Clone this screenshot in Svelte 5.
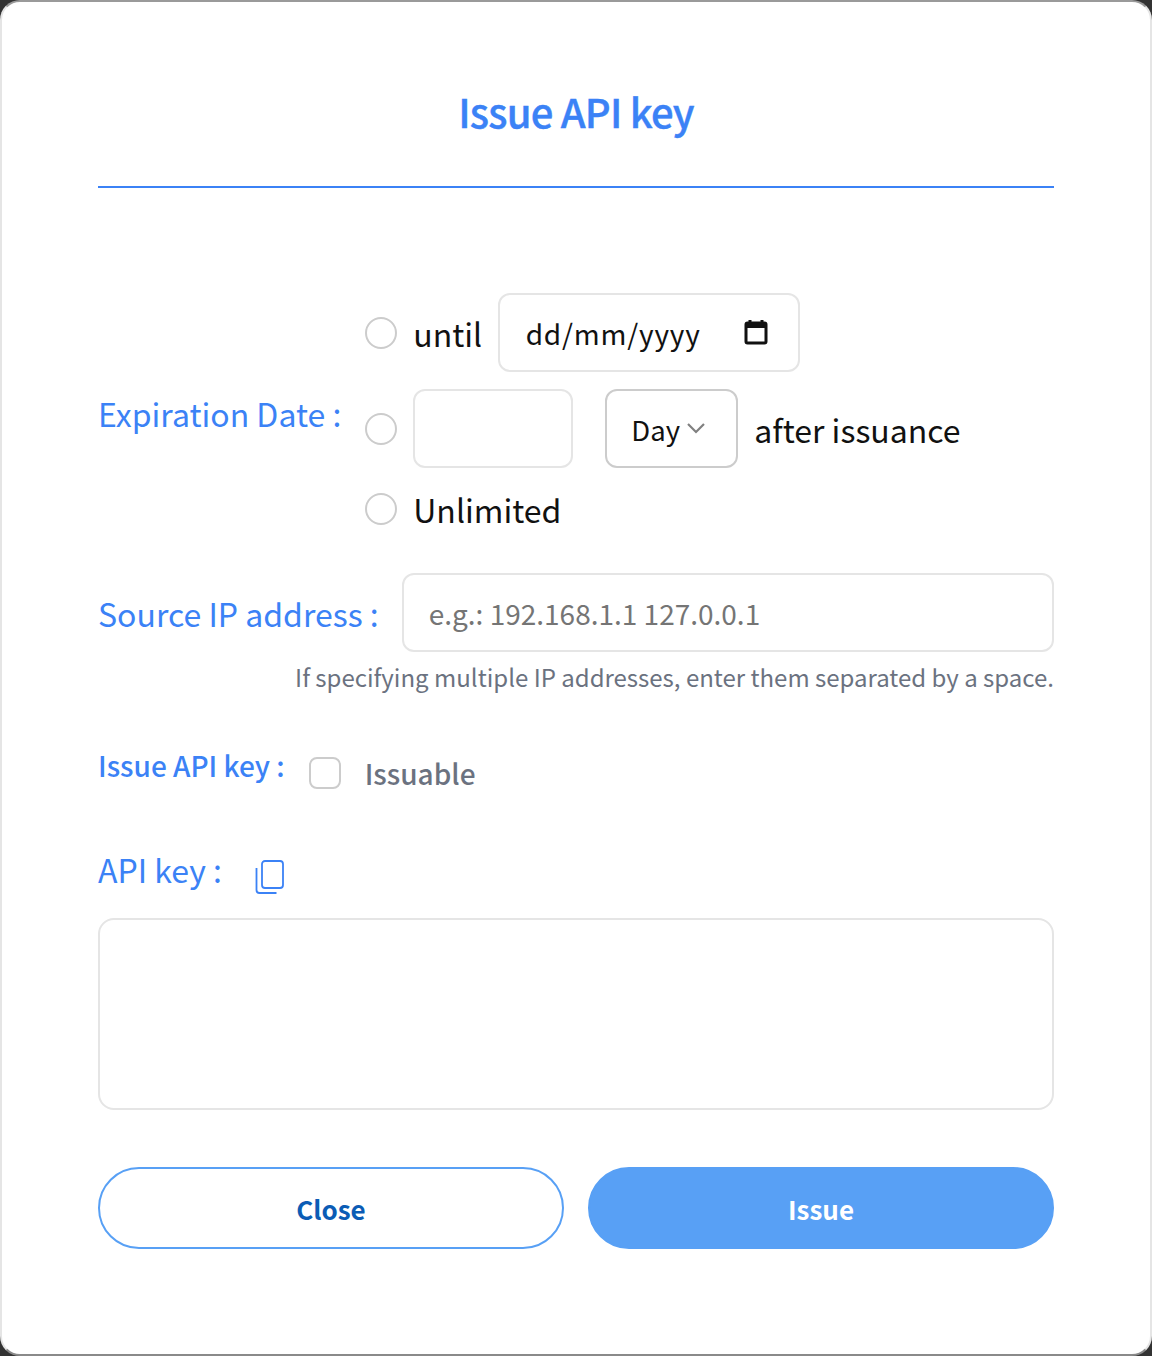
<script lang="ts">
    let period = $state("");
    let count = $state("");
    let sourceIp = $state("");
    let issuable = $state(false);
    let apiKey = $state("");
</script>

<div class="dialog">
    <h1 class="title">Issue API key</h1>

    <div class="expiry">
        <span class="label">Expiration Date :</span>
        <div class="expiry-options">
            <div class="option first">
                <input class="radio" type="radio" name="period" value="until" bind:group={period} />
                <span class="text">until</span>
                <div class="field date-field">
                    <span>dd/mm/yyyy</span>
                    <svg class="calendar" width="24" height="26" viewBox="0 0 24 26">
                        <path d="M6 1v4M18 1v4" stroke="#111" stroke-width="3" fill="none" />
                        <rect x="2" y="4" width="20" height="20" rx="1.5" fill="none" stroke="#111" stroke-width="3" />
                        <rect x="2" y="4" width="20" height="5" fill="#111" />
                    </svg>
                </div>
            </div>
            <div class="option second">
                <input class="radio" type="radio" name="period" value="after" bind:group={period} />
                <input class="field count-field" type="text" bind:value={count} />
                <div class="field select-field">
                    <span>Day</span>
                    <svg width="20" height="12" viewBox="0 0 20 12">
                        <path d="M2 2l8 8 8-8" stroke="#808080" stroke-width="2.2" fill="none" />
                    </svg>
                </div>
                <span class="text">after issuance</span>
            </div>
            <div class="option third">
                <input class="radio" type="radio" name="period" value="unlimited" bind:group={period} />
                <span class="text">Unlimited</span>
            </div>
        </div>
    </div>

    <div class="source">
        <span class="label">Source IP address :</span>
        <input class="field source-field" type="text" placeholder="e.g.: 192.168.1.1 127.0.0.1" bind:value={sourceIp} />
    </div>
    <p class="hint">If specifying multiple IP addresses, enter them separated by a space.</p>

    <div class="issue-row">
        <span class="label small">Issue API key :</span>
        <input class="check" type="checkbox" bind:checked={issuable} />
        <span class="issuable">Issuable</span>
    </div>

    <div class="key-row">
        <span class="label">API key :</span>
        <svg class="copy" width="30" height="36" viewBox="0 0 30 36">
            <rect x="7" y="1" width="21" height="27" rx="3" fill="none" stroke="#3b82f6" stroke-width="1.8" />
            <path d="M1.5 8v22q0 3 3 3h17" fill="none" stroke="#3b82f6" stroke-width="1.8" />
        </svg>
    </div>
    <textarea class="field key-area" bind:value={apiKey}></textarea>

    <div class="actions">
        <button class="btn close">Close</button>
        <button class="btn issue">Issue</button>
    </div>
</div>

<style>
    :global(body) {
        margin: 0;
        background: #333;
    }

    .dialog {
        width: 1152px;
        height: 1356px;
        box-sizing: border-box;
        padding: 0 96px;
        background: #fff;
        border: 2px solid #e5e5e5;
        border-top-color: #9a9a9a;
        border-bottom-color: #8a8a8a;
        border-radius: 20px;
        font-family: "Noto Sans CJK JP", "Noto Sans", sans-serif;
        color: #111;
        overflow: hidden;
    }

    .title {
        margin: 0;
        height: 186px;
        padding-top: 80px;
        box-sizing: border-box;
        border-bottom: 2px solid #3b82f6;
        font-size: 40px;
        line-height: 58px;
        font-weight: 500;
        letter-spacing: -0.8px;
        -webkit-text-stroke: 0.4px #3b82f6;
        text-align: center;
        color: #3b82f6;
    }

    .label {
        font-size: 32px;
        line-height: 48px;
        color: #3b82f6;
        white-space: nowrap;
    }

    .label.small {
        font-size: 28px;
        line-height: 40px;
        font-weight: 500;
    }

    .text {
        font-size: 32px;
        line-height: 48px;
    }

    .field {
        box-sizing: border-box;
        height: 79px;
        margin: 0;
        background: #fff;
        border: 2px solid #e5e5e5;
        border-radius: 12px;
        font-family: inherit;
        outline: none;
    }

    .expiry {
        display: flex;
        align-items: center;
        gap: 24px;
        margin-top: 105px;
    }

    .expiry-options {
        display: flex;
        flex-direction: column;
    }

    .option {
        display: flex;
        align-items: center;
        gap: 16px;
    }

    .second {
        margin-top: 17px;
    }

    .third {
        margin-top: 17px;
        height: 48px;
    }

    .radio,
    .check {
        appearance: none;
        box-sizing: border-box;
        width: 32px;
        height: 32px;
        margin: 0;
        flex-shrink: 0;
        background: #fff;
        border: 2px solid #ccc;
    }

    .radio {
        border-radius: 50%;
    }

    .check {
        border-radius: 8px;
    }

    .date-field {
        display: flex;
        align-items: center;
        justify-content: space-between;
        width: 302px;
        padding: 0 30px 0 25.5px;
        font-size: 28px;
        letter-spacing: 0.8px;
    }

    .calendar {
        margin-bottom: 2px;
    }

    .count-field {
        width: 160px;
    }

    .select-field {
        display: flex;
        align-items: center;
        gap: 6px;
        width: 133px;
        margin-left: 16px;
        padding: 0 0 0 24px;
        border-color: #ccc;
        font-size: 27.5px;
    }

    .select-field svg {
        margin-bottom: 2px;
    }

    .source {
        display: flex;
        align-items: center;
        gap: 23px;
        margin-top: 40px;
    }

    .source-field {
        flex: 1;
        min-width: 0;
        padding: 0 25px;
        font-size: 28px;
        color: #111;
    }

    .source-field::placeholder {
        color: #757575;
        opacity: 1;
    }

    .hint {
        margin: 5px 0 0;
        font-size: 24px;
        line-height: 40px;
        text-align: right;
        color: #6b7280;
    }

    .issue-row {
        display: flex;
        align-items: center;
        margin-top: 44px;
        height: 48px;
    }

    .issue-row .check {
        margin: 16px 0 0 24px;
    }

    .issuable {
        margin: 16px 0 0 24px;
        font-size: 28px;
        font-weight: 500;
        line-height: 44px;
        color: #6b7280;
    }

    .key-row {
        display: flex;
        align-items: center;
        gap: 33px;
        margin-top: 56px;
        height: 48px;
    }

    .copy {
        margin-top: 18px;
    }

    .key-area {
        display: block;
        width: 100%;
        height: 192px;
        margin-top: 25px;
        resize: none;
        border-radius: 16px;
    }

    .actions {
        display: flex;
        gap: 24px;
        margin-top: 57px;
    }

    .btn {
        flex: 1;
        box-sizing: border-box;
        height: 82px;
        padding: 1px 0 0;
        border-radius: 41px;
        border: 2px solid #58a0f5;
        font-family: inherit;
        font-size: 26px;
        font-weight: 700;
    }

    .close {
        background: #fff;
        color: #0b5cb5;
    }

    .issue {
        background: #58a0f5;
        color: #fff;
    }
</style>
